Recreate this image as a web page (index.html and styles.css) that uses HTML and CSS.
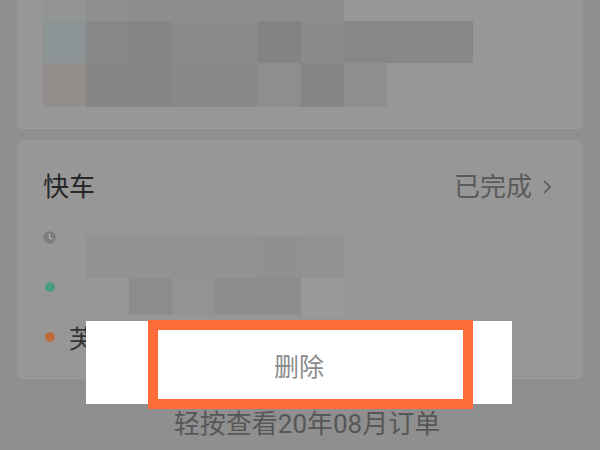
FILE: index.html
```html
<!DOCTYPE html>
<html lang="zh-CN">
<head>
<meta charset="utf-8">
<title>订单</title>
<link rel="stylesheet" href="styles.css">
</head>
<body>
<div class="screen">
  <div class="page">
    <div class="card card-top">
      <div class="mosaic">
        <div class="m a1"></div><div class="m a2"></div><div class="m a3"></div><div class="m a3"></div><div class="m a3"></div><div class="m a3"></div><div class="m a3"></div><div class="m"></div><div class="m"></div><div class="m"></div>
        <div class="m blue"></div><div class="m a4"></div><div class="m a5"></div><div class="m a6"></div><div class="m a6"></div><div class="m a7"></div><div class="m a6"></div><div class="m a4"></div><div class="m a4"></div><div class="m a4"></div>
        <div class="m pink"></div><div class="m a5"></div><div class="m a7b"></div><div class="m a8"></div><div class="m a8"></div><div class="m a9"></div><div class="m a5"></div><div class="m a9"></div><div class="m"></div><div class="m"></div>
      </div>
    </div>

    <div class="card card-order">
      <div class="order-head">
        <span class="order-type">快车</span>
        <span class="order-status">已完成<svg class="chev" viewBox="0 0 10 16" width="10" height="16"><path d="M2 2l6 6-6 6" stroke="#5a5a5a" stroke-width="1.6" fill="none"/></svg></span>
      </div>
      <ul class="order-rows">
        <li class="order-row">
          <svg class="clock" viewBox="0 0 12 12" width="13" height="13"><circle cx="6" cy="6" r="5.8" fill="#7e7e7e"/><path d="M6 2.8v3.4l2.4 1.3" stroke="#b0b0b0" stroke-width="1.3" fill="none"/></svg>
          <span class="faint">○</span>
        </li>
        <li class="order-row"><span class="dot dot-green"></span></li>
        <li class="order-row"><span class="dot dot-orange"></span><span class="addr">芙</span></li>
      </ul>
      <div class="mosaic2">
        <div class="n b1 w2"></div><div class="n b1 w2"></div><div class="n b2"></div><div class="n b1"></div>
        <div class="n"></div><div class="n b4"></div><div class="n b5"></div><div class="n b4 w2"></div><div class="n b6"></div>
      </div>
    </div>

    <p class="hint">轻按查看20年08月订单</p>
  </div>

  <div class="popup">
    <span class="popup-item">删除</span>
  </div>
  <div class="highlight"></div>
</div>
</body>
</html>
```

FILE: styles.css
```css
* { box-sizing: border-box; }

html, body {
  margin: 0;
  padding: 0;
}

body {
  background: #8f8f8f;
  font-family: Roboto, "Noto Sans CJK SC", "Noto Sans", sans-serif;
}

.screen {
  position: relative;
  width: 600px;
  height: 450px;
  overflow: hidden;
  background: #8f8f8f;
}

.page {
  padding: 0 17px;
}

.card {
  background: #979797;
  border-radius: 5px;
  box-shadow: 0 1px 0 #9c9c9c;
}

.card-top {
  height: 128px;
  border-radius: 0 0 5px 5px;
  padding-left: 26px;
}

.mosaic {
  display: grid;
  grid-template-columns: repeat(10, 43px);
  grid-template-rows: 21px 42px 44px;
}

.m { background: transparent; }
.a1 { background: #939494; }
.a2 { background: #8e8e8e; }
.a3 { background: #8d8d8d; }
.a4 { background: #878787; }
.a5 { background: #868686; }
.a6 { background: #8b8b8b; }
.a7 { background: #838383; }
.a7b { background: #858585; }
.a8 { background: #888888; }
.a9 { background: #8e8e8e; }
.blue { background: #8c9395; }
.pink { background: #948e8d; }

.card-order {
  position: relative;
  margin-top: 12px;
  height: 238px;
  padding: 32px 31px 16px 26px;
}

.order-head {
  display: flex;
  justify-content: space-between;
  align-items: center;
  height: 30px;
}

.order-type {
  font-size: 26px;
  line-height: 30px;
  color: #262626;
}

.order-status {
  font-size: 26px;
  line-height: 30px;
  color: #5a5a5a;
  display: flex;
  align-items: center;
}

.chev {
  display: block;
  margin-left: 10px;
  margin-top: -1px;
}

.order-rows {
  list-style: none;
  margin: 10px 0 0 0;
  padding: 0;
}

.order-row {
  height: 50px;
  display: flex;
  align-items: center;
  padding-left: 2px;
  gap: 12px;
}

.clock {
  display: block;
  flex-shrink: 0;
  width: 13px;
  height: 13px;
  margin-left: -2px;
}

.faint {
  color: #9c9c9c;
  font-size: 14px;
  margin-top: -8px;
}

.dot {
  flex-shrink: 0;
  width: 10px;
  height: 10px;
  border-radius: 50%;
}

.dot-green { background: #4c9d86; }
.dot-orange { background: #bd6a3d; }

.addr {
  font-size: 25px;
  color: #333333;
  margin-left: 2px;
}

.mosaic2 {
  position: absolute;
  left: 69px;
  top: 96px;
  display: grid;
  grid-template-columns: repeat(6, 43px);
  grid-template-rows: 42px 37px;
}

.n { background: transparent; }
.w2 { grid-column: span 2; }
.b1 { background: #929292; }
.b2 { background: #909090; }
.b4 { background: #8c8c8c; }
.b5 { background: #939393; }
.b6 { background: #9a9a9a; }

.hint {
  margin: 31px 0 0 0;
  padding-left: 14px;
  text-align: center;
  font-size: 26px;
  line-height: 30px;
  color: #575757;
}

.popup {
  position: absolute;
  left: 86px;
  top: 321px;
  width: 426px;
  height: 83px;
  background: #ffffff;
  display: flex;
  align-items: center;
  justify-content: center;
}

.popup-item {
  font-size: 25px;
  color: #8a8a8a;
  padding-top: 4px;
}

.highlight {
  position: absolute;
  left: 148px;
  top: 320px;
  width: 325px;
  height: 89px;
  border: 10px solid #fe6c3a;
}
```
